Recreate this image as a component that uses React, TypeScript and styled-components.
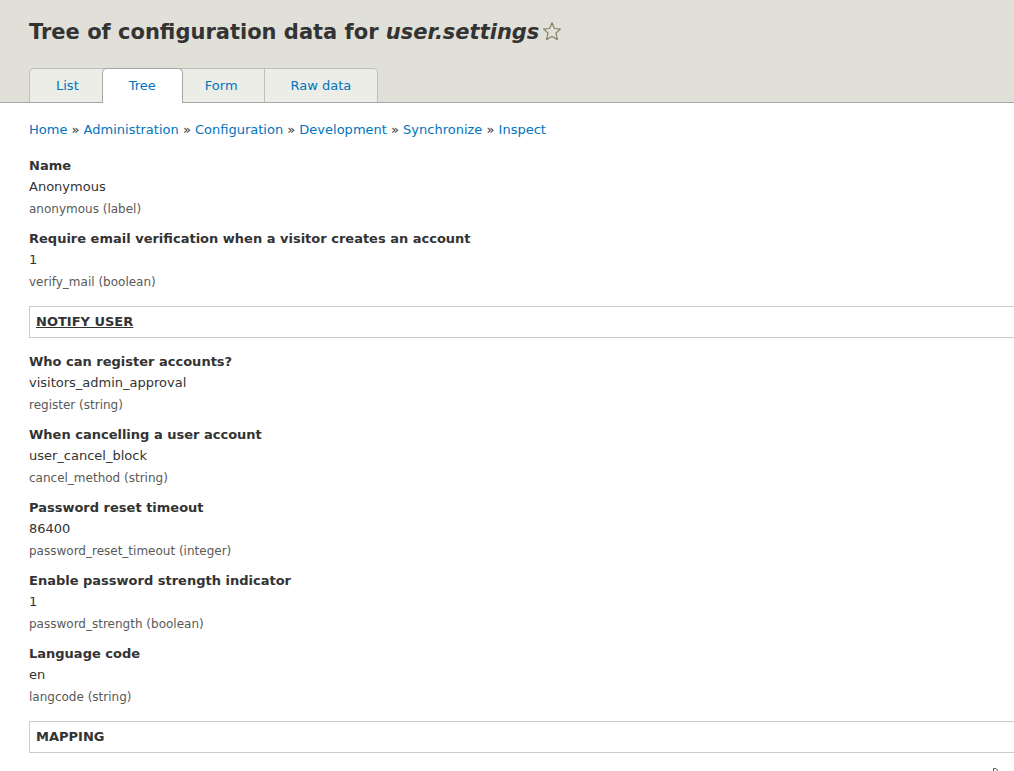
import React from "react";
import styled, { createGlobalStyle } from "styled-components";

const GlobalStyle = createGlobalStyle`
  *, *::before, *::after { box-sizing: border-box; }
  body {
    margin: 0;
    background: #fff;
    color: #333;
    font: 13px/21px "DejaVu Sans", sans-serif;
    overflow-x: hidden;
  }
`;

const Header = styled.header`
  background: #e0e0d8;
  border-bottom: 1px solid #a6a6a6;
  padding: 16px 29px 0;
`;

const TitleRow = styled.div`
  display: flex;
  align-items: center;
  gap: 4px;
`;

const Title = styled.h1`
  margin: 0;
  font-size: 21px;
  line-height: 32px;
  font-weight: bold;
`;

const StarButton = styled.button`
  display: flex;
  padding: 0;
  border: 0;
  background: none;
  cursor: pointer;
`;

const Tabs = styled.nav`
  display: flex;
  margin-top: 20px;
`;

const Tab = styled.a<{ $active?: boolean }>`
  position: relative;
  z-index: ${(p) => (p.$active ? 1 : 0)};
  height: ${(p) => (p.$active ? 35 : 34)}px;
  margin: ${(p) => (p.$active ? "0 -4px -1px" : "0 0 0 -1px")};
  padding: 0 26px;
  border: 1px solid ${(p) => (p.$active ? "#a6a6a6" : "#bfbfbf")};
  border-bottom: 0;
  border-radius: ${(p) => (p.$active ? "5px 5px 0 0" : "0")};
  background: ${(p) => (p.$active ? "#fff" : "#ecede6")};
  color: #0074bd;
  line-height: 33px;
  text-decoration: none;

  &:first-child {
    margin-left: 0;
    border-top-left-radius: 5px;
  }
  &:last-child {
    border-top-right-radius: 5px;
  }
`;

const Content = styled.main`
  padding: 16px 0 0 29px;
`;

const Breadcrumb = styled.ol`
  display: flex;
  flex-wrap: wrap;
  margin: 0 0 15px;
  padding: 0;
  list-style: none;
`;

const Crumb = styled.li`
  white-space: pre;

  & + &::before {
    content: " » ";
  }
`;

const CrumbLink = styled.a`
  color: #0074bd;
  text-decoration: none;
`;

const Fields = styled.dl`
  display: flex;
  flex-direction: column;
  gap: 8px;
  margin: 0;
`;

const Field = styled.div``;

const Label = styled.dt`
  font-weight: bold;
`;

const Value = styled.dd`
  margin: 0;
  line-height: 22px;
`;

const Key = styled.dd`
  margin: 0;
  color: #595959;
  font-size: 12px;
  line-height: 22px;
`;

const Details = styled.details`
  margin: 13px 0;
  border: 1px solid #ccc;
  border-right: 0;
`;

const Summary = styled.summary`
  padding: 4px 6px;
  line-height: 22px;
  font-weight: bold;
  text-transform: uppercase;
  list-style: none;
  cursor: pointer;
`;

const SummaryText = styled.span<{ $underlined?: boolean }>`
  text-decoration: ${(p) => (p.$underlined ? "underline" : "none")};
`;

const Footer = styled.div`
  display: flex;
  justify-content: flex-end;
  height: 5px;
  overflow: hidden;
  padding: 2px 15px 0 0;
`;

type FieldData = { label: string; value: string; name: string };

const accountFields: FieldData[] = [
  { label: "Name", value: "Anonymous", name: "anonymous (label)" },
  { label: "Require email verification when a visitor creates an account", value: "1", name: "verify_mail (boolean)" },
];

const registrationFields: FieldData[] = [
  { label: "Who can register accounts?", value: "visitors_admin_approval", name: "register (string)" },
  { label: "When cancelling a user account", value: "user_cancel_block", name: "cancel_method (string)" },
  { label: "Password reset timeout", value: "86400", name: "password_reset_timeout (integer)" },
  { label: "Enable password strength indicator", value: "1", name: "password_strength (boolean)" },
  { label: "Language code", value: "en", name: "langcode (string)" },
];

function FieldList({ items }: { items: FieldData[] }) {
  return (
    <Fields>
      {items.map((item) => (
        <Field key={item.name}>
          <Label>{item.label}</Label>
          <Value>{item.value}</Value>
          <Key>{item.name}</Key>
        </Field>
      ))}
    </Fields>
  );
}

export default function App() {
  return (
    <>
      <GlobalStyle />
      <Header>
        <TitleRow>
          <Title>
            Tree of configuration data for <em>user.settings</em>
          </Title>
          <StarButton aria-label="Add to shortcuts">
            <svg width="18" height="20" viewBox="0 0 18 20" fill="none" stroke="#7c7c5e" strokeWidth="1.1" strokeLinejoin="round">
              <path d="M9 .8l2.400 5.700 6 .5-4.500 4.200 1.500 6.300L9 14.500l-5.400 3 1.500-6.300L.6 7l6-.5z" />
            </svg>
          </StarButton>
        </TitleRow>
        <Tabs aria-label="Tabs">
          <Tab href="#list">List</Tab>
          <Tab href="#tree" $active aria-current="page">Tree</Tab>
          <Tab href="#form">Form</Tab>
          <Tab href="#raw">Raw data</Tab>
        </Tabs>
      </Header>
      <Content>
        <nav aria-label="Breadcrumb">
          <Breadcrumb>
            {["Home", "Administration", "Configuration", "Development", "Synchronize", "Inspect"].map((name) => (
              <Crumb key={name}>
                <CrumbLink href={`#${name.toLowerCase()}`}>{name}</CrumbLink>
              </Crumb>
            ))}
          </Breadcrumb>
        </nav>
        <FieldList items={accountFields} />
        <Details>
          <Summary>
            <SummaryText $underlined>Notify user</SummaryText>
          </Summary>
        </Details>
        <FieldList items={registrationFields} />
        <Details>
          <Summary>
            <SummaryText>Mapping</SummaryText>
          </Summary>
        </Details>
        <Footer>
          <svg width="6" height="3" viewBox="0 0 6 3" fill="none" stroke="#555" aria-hidden="true">
            <path d="M.5 3V.5h2L5 2.500" />
          </svg>
        </Footer>
      </Content>
    </>
  );
}
